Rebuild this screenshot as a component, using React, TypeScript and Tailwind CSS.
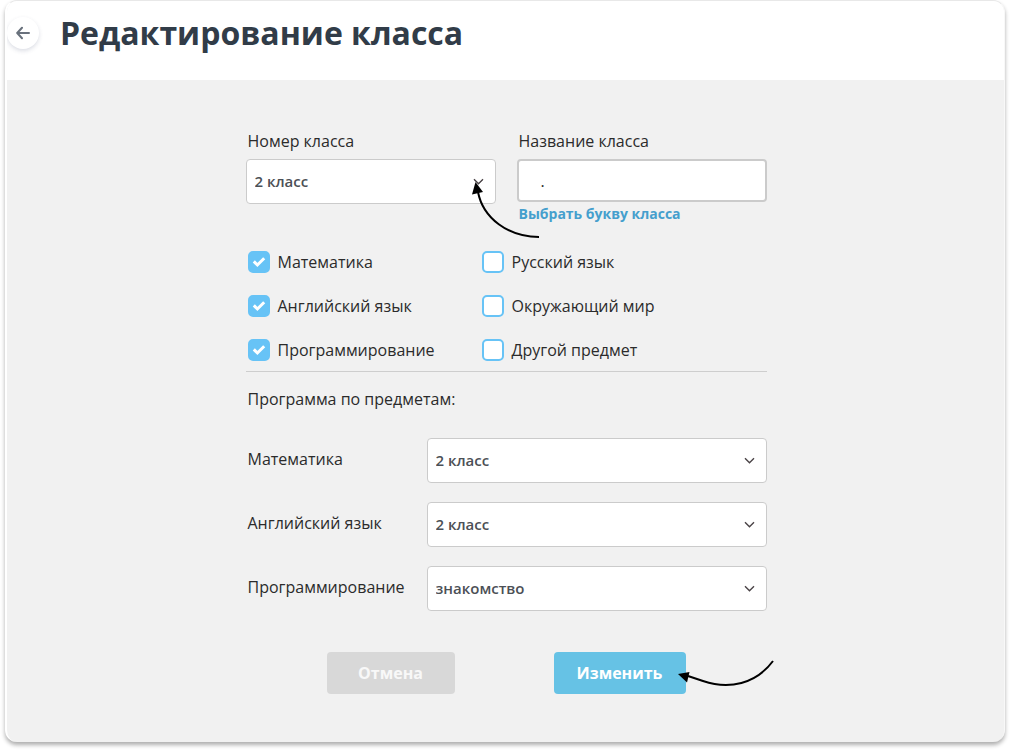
import { useState } from "react";
import type { ReactNode } from "react";

function Chevron() {
  return (
    <svg
      className="pointer-events-none col-start-1 row-start-1 mr-3 self-center justify-self-end"
      width="11"
      height="8"
      viewBox="0 0 11 8"
      fill="none"
      stroke="#4a4346"
      strokeWidth="1.4"
      aria-hidden="true"
    >
      <path d="M1 1.2 5.5 5.7 10 1.2" />
    </svg>
  );
}

type SelectBoxProps = {
  id: string;
  value: string;
  options: string[];
  children?: ReactNode;
};

function SelectBox({ id, value, options, children }: SelectBoxProps) {
  return (
    <div className="relative grid w-full">
      <select
        id={id}
        defaultValue={value}
        className="col-start-1 row-start-1 h-[45px] w-full appearance-none rounded border border-[#cbcbcb] bg-white pr-8 pb-0.5 pl-2 text-[15px] font-semibold text-[#4c5056]"
      >
        {options.map((option) => (
          <option key={option}>{option}</option>
        ))}
      </select>
      <Chevron />
      {children}
    </div>
  );
}

function Subject({ name, initial }: { name: string; initial: boolean }) {
  const [checked, setChecked] = useState(initial);
  return (
    <label className="flex h-[22px] items-center gap-2">
      <span className="grid">
        <input
          type="checkbox"
          checked={checked}
          onChange={() => setChecked(!checked)}
          className="col-start-1 row-start-1 size-[22px] appearance-none rounded-[5px] border-2 border-[#67c3f6] bg-white checked:bg-[#67c3f6]"
        />
        {checked && (
          <svg
            className="pointer-events-none col-start-1 row-start-1 self-center justify-self-center"
            width="14"
            height="12"
            viewBox="0 0 14 12"
            fill="none"
            stroke="white"
            strokeWidth="3"
            aria-hidden="true"
          >
            <path d="M1.8 5.4 5.4 9 12.2 2.2" />
          </svg>
        )}
      </span>
      {name}
    </label>
  );
}

const subjects = [
  { name: "Математика", on: true },
  { name: "Русский язык", on: false },
  { name: "Английский язык", on: true },
  { name: "Окружающий мир", on: false },
  { name: "Программирование", on: true },
  { name: "Другой предмет", on: false },
];

const grades = ["1 класс", "2 класс", "3 класс", "4 класс"];

const programs = [
  { id: "math", name: "Математика", value: "2 класс", options: grades },
  { id: "english", name: "Английский язык", value: "2 класс", options: grades },
  { id: "coding", name: "Программирование", value: "знакомство", options: ["знакомство", "основы"] },
];

export default function App() {
  return (
    <div className="bg-white px-[5px] pb-2 font-['Open_Sans','Noto_Sans',sans-serif] text-[16px] leading-[22px] text-[#2b2b2b]">
      <main className="overflow-clip rounded-xl border-t border-r border-l-2 border-t-[#e8e8e8] border-r-[#f8f8f8] border-l-white bg-[#f1f1f1] shadow-[0_3px_4px_rgba(0,0,0,0.32)]">
        <header className="flex h-[79px] items-start gap-[21px] bg-white pt-[10px]">
          <button
            type="button"
            aria-label="Назад"
            className="mt-[6px] flex size-8 items-center justify-center rounded-full bg-white shadow-[0_2px_4px_rgba(60,70,110,0.18)]"
          >
            <svg width="14" height="14" viewBox="0 0 14 14" fill="none" stroke="#69717c" strokeWidth="2" strokeLinecap="round" strokeLinejoin="round" aria-hidden="true">
              <path d="M13 7H1.500M6 1.800 1.200 7 6 12.200" />
            </svg>
          </button>
          <h1 className="text-[32px] leading-[44px] font-bold text-[#313c48]">Редактирование класса</h1>
        </header>

        <form className="mx-auto max-w-[522px] pt-[50px] pb-12 pl-px" onSubmit={(e) => e.preventDefault()}>
          <div className="grid grid-cols-2 gap-x-[21px]">
            <div className="flex flex-col gap-[7px]">
              <label htmlFor="grade" className="pl-0.5">Номер класса</label>
              <SelectBox id="grade" value="2 класс" options={grades}>
                <svg className="pointer-events-none absolute top-[21px] left-[222px] overflow-visible" width="74" height="60" viewBox="0 0 74 60" fill="none" aria-hidden="true">
                  <path d="M10 12C15 38 40 57 71 57" stroke="black" strokeWidth="2" />
                  <path d="M7.500 2 4 14.500 15 12Z" fill="black" />
                </svg>
              </SelectBox>
            </div>
            <div className="flex flex-col">
              <label htmlFor="title" className="pl-0.5">Название класса</label>
              <input
                id="title"
                defaultValue="."
                className="mt-[7px] h-[43px] w-full rounded border-2 border-[#cbcbcb] bg-white px-[22px] text-[16px]"
              />
              <a href="#letter" className="mt-px pl-0.5 text-[14px] font-bold text-[#459fcd]">Выбрать букву класса</a>
            </div>
          </div>

          <div className="mt-[26px] grid grid-cols-[234px_1fr] gap-y-[22px] border-b border-[#cecece] pb-[10px] pl-0.5">
            {subjects.map((s) => (
              <Subject key={s.name} name={s.name} initial={s.on} />
            ))}
          </div>

          <h2 className="mt-4 pl-0.5">Программа по предметам:</h2>

          <div className="mt-7 flex flex-col gap-[19px]">
            {programs.map((p) => (
              <div key={p.id} className="grid grid-cols-[181px_1fr]">
                <label htmlFor={p.id} className="mt-[10px] pl-0.5">{p.name}</label>
                <SelectBox id={p.id} value={p.value} options={p.options} />
              </div>
            ))}
          </div>

          <div className="mt-[41px] flex justify-center gap-[99px]">
            <button type="button" className="h-[42px] w-32 rounded bg-[#d8d8d8] font-bold text-[#f8f8f8]">
              Отмена
            </button>
            <div className="relative">
              <button type="submit" className="h-[42px] w-[132px] rounded bg-[#66c2e5] font-bold text-white">
                Изменить
              </button>
              <svg className="pointer-events-none absolute top-[6px] left-[122px]" width="100" height="32" viewBox="0 0 100 32" fill="none" aria-hidden="true">
                <path d="M12 18 27 23C53 32 80 26 97 3" stroke="black" strokeWidth="2" />
                <path d="M2 16 13.500 14 11 24.500Z" fill="black" />
              </svg>
            </div>
          </div>
        </form>
      </main>
    </div>
  );
}
